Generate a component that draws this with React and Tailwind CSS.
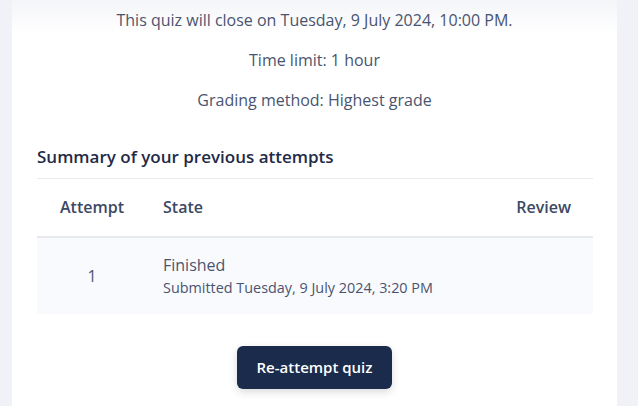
export default function App() {
  return (
    <div className="h-[406px] w-[638px] overflow-hidden bg-[#f0f2f8] pl-[12px] font-['Open_Sans',sans-serif]">
      <div className="h-full w-[605px] bg-white bg-[linear-gradient(to_bottom,#f4f5f8_0px,#ffffff_34px)] px-[25px] pt-[8px] text-[#4a5470]">
        {/* quiz info */}
        <div className="text-center text-[16px] leading-[24px]">
          <p className="mb-[16px]">This quiz will close on Tuesday, 9 July 2024, 10:00 PM.</p>
          <p className="mb-[16px]">Time limit: 1 hour</p>
          <p>Grading method: Highest grade</p>
        </div>

        <h3 className="mt-[33px] text-[17px] font-semibold leading-[24px] text-[#1f2a48]">
          Summary of your previous attempts
        </h3>

        {/* attempts table */}
        <div className="mt-[9px] w-[556px] border-t border-[#e8e9ec]">
          <div className="flex h-[59px] items-center border-b-2 border-[#e8e9ec] pb-[2px] text-[16px] font-semibold text-[#3d4864]">
            <div className="w-[110px] text-center">Attempt</div>
            <div className="flex-1 pl-[16px]">State</div>
            <div className="pr-[22px]">Review</div>
          </div>
          <div className="flex h-[76px] items-center bg-[#f9fafd]">
            <div className="w-[110px] text-center text-[16px]">1</div>
            <div className="flex-1 pl-[16px]">
              <div className="text-[16px] leading-[23px]">Finished</div>
              <div className="text-[14.4px] leading-[21px]">Submitted Tuesday, 9 July 2024, 3:20 PM</div>
            </div>
          </div>
        </div>

        <div className="mt-[32px] flex justify-center">
          <button className="h-[43px] w-[155px] rounded-[6px] bg-[#1a2b4c] text-[15px] font-semibold text-white shadow-[0_3px_8px_rgba(0,0,0,0.15)]">
            Re-attempt quiz
          </button>
        </div>
      </div>
    </div>
  );
}
